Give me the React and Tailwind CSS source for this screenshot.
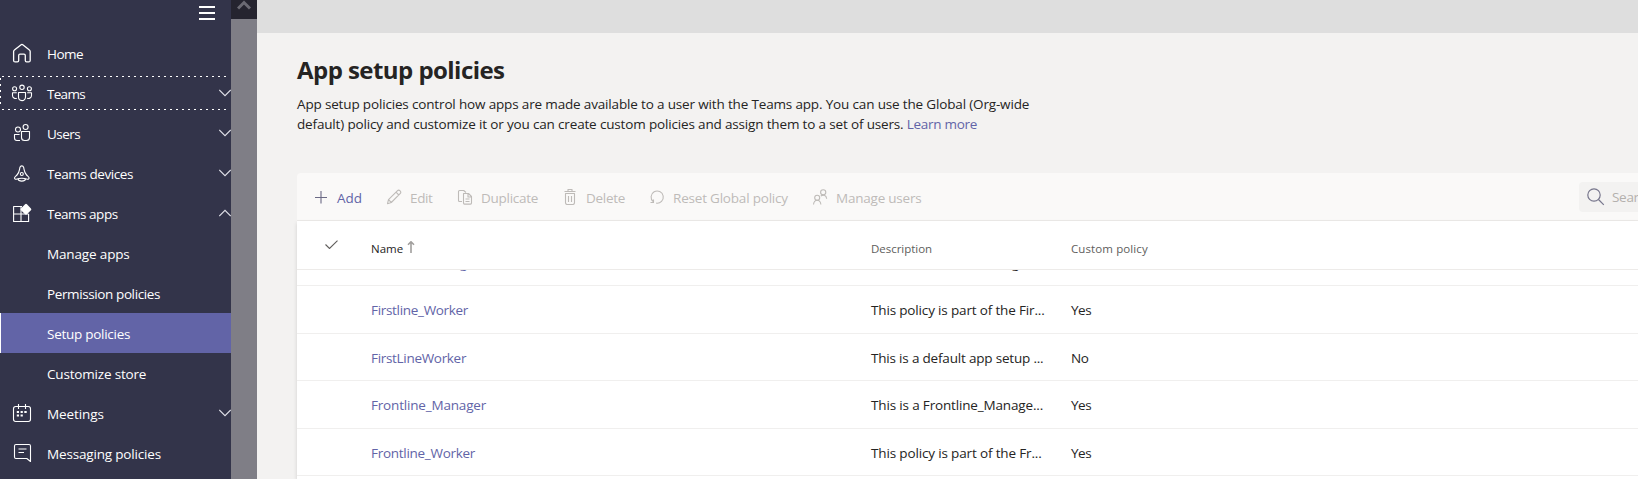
import React from "react";

function Icon({ children, className = "size-6" }) {
  return (
    <svg
      viewBox={className.includes("size-6") ? "0 0 24 24" : "0 0 16 16"}
      className={`${className} shrink-0`}
      fill="none"
      stroke="currentColor"
      strokeWidth="1.1"
      strokeLinejoin="round"
    >
      {children}
    </svg>
  );
}

const icons = {
  home: (
    <Icon className="size-6 [stroke-width:1.3]">
      <path d="M3.6 10.6a2 2 0 0 1 .8-1.6L10.8 3.9a1.8 1.8 0 0 1 2.3 0L19.4 9a2 2 0 0 1 .8 1.6v8.8a1.5 1.5 0 0 1-1.5 1.5h-2.1a1.3 1.3 0 0 1-1.3-1.3v-5.2a1.3 1.3 0 0 0-1.3-1.3h-4a1.3 1.3 0 0 0-1.3 1.3v5.2a1.3 1.3 0 0 1-1.3 1.3H5.1a1.5 1.5 0 0 1-1.5-1.5z" />
    </Icon>
  ),
  teams: (
    <Icon>
      <circle cx="4.6" cy="7.7" r="2" />
      <circle cx="12" cy="6.3" r="2.2" />
      <circle cx="19.4" cy="7.7" r="2" />
      <path d="M8.5 11.5h7v4.6a3.5 3.5 0 0 1-7 0zM6.8 11.8H2.5v2.7a3 3 0 0 0 4.3 2.7M17.2 11.8h4.3v2.7a3 3 0 0 1-4.3 2.7" />
    </Icon>
  ),
  users: (
    <Icon>
      <circle cx="8" cy="8.5" r="2.5" />
      <circle cx="15.6" cy="6" r="2.5" />
      <path d="M11.5 10.5h8v6a3 3 0 0 1-3 3h-2a3 3 0 0 1-3-3zM9.6 13.5H4.5v3.5a2.5 2.5 0 0 0 2.5 2.5h3" />
    </Icon>
  ),
  devices: (
    <Icon>
      <path d="M10 6.2a1.9 1.9 0 0 1 3.6 0c.8 3.2.4 5.2 3 7.8 1.2 1.2 2.5 1.9 2.5 3.1 0 .9-.9 1.3-1.7 1.1-3.5-1.2-7.7-1.2-11.2 0-.8.2-1.7-.2-1.7-1.1 0-1.2 1.3-1.9 2.5-3.1 2.6-2.6 2.2-4.6 3-7.8z" />
      <circle cx="11.8" cy="13" r="1.5" />
      <path d="M8 17.9c.5 3 7.100 3 7.600 0" />
    </Icon>
  ),
  apps: (
    <Icon>
      <path d="M12 5.5H3.6v15h15v-7.5M3.6 13h15M11 5.5v15" />
      <path d="M16 4.2l4 4.1-4 4.1-4.1-4.1z" fill="currentColor" strokeWidth="2.6" />
    </Icon>
  ),
  meetings: (
    <Icon>
      <rect x="3.5" y="5.5" width="17" height="15" rx="2.2" />
      <path d="M8.5 3v5M15.5 3v5" />
      <path d="M6.8 11h2.2M10.6 11h2.2M14.3 11h2.4M6.8 14.5h2.2M10.6 14.5h2.2" strokeWidth="2.2" />
    </Icon>
  ),
  messaging: (
    <Icon>
      <path d="M6 3.5h13a1.5 1.5 0 0 1 1.5 1.5v15.5l-3.7-3H6a1.5 1.5 0 0 1-1.5-1.5V5A1.5 1.5 0 0 1 6 3.5z" />
      <path d="M8.5 8h8M8.5 11.5h5.5" />
    </Icon>
  ),
};

const nav = [
  { label: "Home", icon: "home", track: "tracking-[-0.5px]" },
  { label: "Teams", icon: "teams", chevron: "down", focused: true, track: "tracking-[-0.7px]" },
  { label: "Users", icon: "users", chevron: "down", track: "tracking-[-0.5px]" },
  { label: "Teams devices", icon: "devices", chevron: "down", track: "tracking-[-0.42px]" },
  { label: "Teams apps", icon: "apps", chevron: "up", track: "tracking-[-0.48px]" },
  { label: "Manage apps", track: "tracking-[-0.15px]" },
  { label: "Permission policies", track: "tracking-[-0.39px]" },
  { label: "Setup policies", selected: true, track: "tracking-[-0.27px]" },
  { label: "Customize store", track: "tracking-[-0.18px]" },
  { label: "Meetings", icon: "meetings", chevron: "down", track: "tracking-[-0.1px]" },
  { label: "Messaging policies", icon: "messaging", track: "tracking-[-0.17px]" },
];

function NavItem({ item }) {
  return (
    <li
      className={`relative flex h-10 shrink-0 items-center pl-2.5 ${
        item.selected ? "bg-[#6264a7] shadow-[inset_1px_0_0_#fff]" : ""
      }`}
    >
      {item.focused && (
        <svg className="absolute top-[3px] left-0 h-[34px] w-[231px]" fill="none" stroke="#fff" strokeDasharray="2 4">
          <path d="M2 .5h227M2 33.5h227M.5 2v30" />
        </svg>
      )}
      <span className="flex w-[37px] shrink-0">{item.icon && icons[item.icon]}</span>
      <span className={`grow pt-px whitespace-nowrap ${item.track}`}>{item.label}</span>
      {item.chevron && (
        <svg className="h-2 w-3 shrink-0" fill="none" stroke="#e0e0e8" strokeWidth="1.1">
          <path d={item.chevron === "down" ? "M.3 1l5.7 5.7L11.7 1" : "M.3 7l5.7-5.7L11.7 7"} />
        </svg>
      )}
    </li>
  );
}

function Sidebar() {
  return (
    <nav className="flex w-[231px] shrink-0 flex-col overflow-hidden bg-[#33344a] text-white">
      <div className="flex h-[33px] shrink-0 items-start justify-end pt-1.5 pr-4">
        <div className="flex w-4 flex-col gap-1">
          <span className="h-0.5 bg-white" />
          <span className="h-0.5 bg-white" />
          <span className="h-0.5 bg-white" />
        </div>
      </div>
      <ul>
        {nav.map((item) => (
          <NavItem key={item.label} item={item} />
        ))}
      </ul>
    </nav>
  );
}

function Scrollbar() {
  return (
    <div className="w-[26px] shrink-0 bg-[#7f7e86]">
      <div className="flex h-[19px] justify-center bg-[#25242f]">
        <svg className="h-[11px] w-3.5" fill="none" stroke="#6b6a73" strokeWidth="3">
          <path d="M1 8.5l6-6 6 6" />
        </svg>
      </div>
    </div>
  );
}

const actions = [
  {
    label: "Add",
    width: "w-[73px]",
    track: "",
    icon: <path d="M8 2v12.5M2 8.5h12" stroke="#6b6a85" />,
  },
  {
    label: "Edit",
    width: "w-[71px]",
    track: "tracking-[-0.35px]",
    icon: <path d="M1.5 14.7l1-4 8.8-8.8a1.9 1.9 0 0 1 2.8 2.8l-8.8 8.8zM10 3.2l2.8 2.8M2.5 10.7l2.8 2.8" />,
  },
  {
    label: "Duplicate",
    width: "w-[105px]",
    track: "tracking-[-0.27px]",
    icon: (
      <>
        <path d="M5 12.5H2.5a1 1 0 0 1-1-1v-9a1 1 0 0 1 1-1h4.2l2.3 2" />
        <path d="M6.5 4.5h5l3 3v6.6a1 1 0 0 1-1 1h-6a1 1 0 0 1-1-1zM11 4.5v3.5h3.5M8.5 10h4M8.5 12.5h4" />
      </>
    ),
  },
  {
    label: "Delete",
    width: "w-[87px]",
    track: "tracking-[-0.3px]",
    icon: <path d="M2.5 2.5h11M6 2.5V.5h4v2M3.5 4.5h9v9.3a1.7 1.7 0 0 1-1.7 1.7H5.2a1.7 1.7 0 0 1-1.7-1.7zM6.5 7v6M9.5 7v6" />,
  },
  {
    label: "Reset Global policy",
    width: "w-[163px]",
    track: "tracking-[-0.2px]",
    icon: <path d="M7.2 14.1A6.1 6.1 0 1 0 4.2 12.7M1.5 13.5h3v-3" />,
  },
  {
    label: "Manage users",
    width: "w-[120px]",
    track: "tracking-[-0.22px]",
    icon: (
      <>
        <circle cx="5.2" cy="8.8" r="2.5" />
        <circle cx="11.2" cy="3.3" r="2.6" />
        <path d="M1.5 15.5c.3-2.5 1.8-4.2 3.7-4.2s3.4 1.7 3.7 4.2M8.8 7.2c2-2 5.4-1.3 5.9 2.5" />
      </>
    ),
  },
];

function Toolbar() {
  return (
    <div className="flex h-[48px] rounded-tl-sm border-b border-[#edebe9] bg-[#faf9f8] pl-4">
      {actions.map((a, i) => (
        <div
          key={a.label}
          className={`flex shrink-0 items-center gap-2 ${a.width} ${i === 0 ? "text-[#6264a7]" : "text-[#bebbb8]"}`}
        >
          <Icon className="size-4">{a.icon}</Icon>
          <span className={`pt-[3px] whitespace-nowrap ${a.track}`}>{a.label}</span>
        </div>
      ))}
      <div className="mt-[9px] ml-auto flex h-[30px] w-[59px] items-center overflow-hidden rounded-l-sm bg-[#f3f2f1] pl-2">
        <svg className="h-[18px] w-[25px] shrink-0" fill="none" stroke="#77768c" strokeWidth="1.2">
          <circle cx="7" cy="7" r="6.2" />
          <path d="M11.5 11.5l5.3 5.3" />
        </svg>
        <span className="tracking-[-0.3px] text-[#b3b0ad]">Search</span>
      </div>
    </div>
  );
}

const rows = [
  { name: "Firstline_Worker", nt: "tracking-[-0.31px]", desc: "This policy is part of the Fir...", dt: "tracking-[-0.16px]", custom: "Yes", h: "h-[48px]" },
  { name: "FirstLineWorker", nt: "tracking-[-0.31px]", desc: "This is a default app setup ...", dt: "tracking-[-0.19px]", custom: "No", h: "h-[47px] pt-0.5" },
  { name: "Frontline_Manager", nt: "tracking-[-0.18px]", desc: "This is a Frontline_Manage...", dt: "tracking-[-0.16px]", custom: "Yes", h: "h-[48px]" },
  { name: "Frontline_Worker", nt: "tracking-[-0.28px]", desc: "This policy is part of the Fr...", dt: "tracking-[-0.15px]", custom: "Yes", h: "h-[47px] pt-0.5" },
];

function Cells({ row }) {
  return (
    <>
      <span className={`w-[500px] shrink-0 text-[#6264a7] ${row.nt}`}>{row.name}</span>
      <span className={`w-[200px] shrink-0 text-[#252423] ${row.dt}`}>{row.desc}</span>
      <span className="tracking-[-0.5px] text-[#252423]">{row.custom}</span>
    </>
  );
}

function PolicyTable() {
  return (
    <div className="grow bg-white whitespace-nowrap shadow-[0_2px_4px_rgba(0,0,0,0.14)]">
      <div className="flex h-[49px] items-center border-b border-[#edebe9] pl-7 text-[11.5px]">
        <svg className="mb-0.5 h-[9px] w-[46px] shrink-0" fill="none" stroke="#605e5c" strokeWidth="1.1">
          <path d="M.5 4.5l4 4L12.5.7" />
        </svg>
        <div className="flex w-[500px] shrink-0 items-center gap-1 pt-2">
          <span className="text-[#252423]">Name</span>
          <svg className="mb-1 h-3 w-[9px]" fill="none" stroke="#a19f9d" strokeWidth="1.6">
            <path d="M4 12V1M1 3.8l3-3 3 3" />
          </svg>
        </div>
        <span className="w-[200px] shrink-0 pt-2 tracking-[-0.03px] text-[#605e5c]">Description</span>
        <span className="pt-2 tracking-[0.1px] text-[#605e5c]">Custom policy</span>
      </div>
      <div className="flex h-4 items-end overflow-hidden border-b border-[#f0efee] pb-[12.5px] pl-[74px]">
        <Cells
          row={{
            name: "Firstline_Manager",
            nt: "tracking-[-0.18px]",
            desc: "This is a Firstline_Manage...",
            dt: "tracking-[-0.16px]",
          }}
        />
      </div>
      {rows.map((row) => (
        <div key={row.name} className={`flex items-center border-b border-[#f0efee] pl-[74px] ${row.h}`}>
          <Cells row={row} />
        </div>
      ))}
    </div>
  );
}

export default function App() {
  return (
    <div className="flex h-[479px] w-full overflow-hidden bg-[#f3f2f1] font-['Open_Sans','Noto_Sans',sans-serif] text-[13.5px] leading-5">
      <Sidebar />
      <Scrollbar />
      <main className="flex min-w-0 grow flex-col">
        <div className="h-[33px] shrink-0 bg-[#dedede]" />
        <div className="flex grow flex-col pl-10">
          <header className="h-[140px] shrink-0 pt-[21px] whitespace-nowrap text-[#252423]">
            <h1 className="text-[24px] leading-8 font-bold tracking-[-0.55px]">App setup policies</h1>
            <p className="mt-2 tracking-[-0.16px]">
              App setup policies control how apps are made available to a user with the Teams app. You can use the
              Global (Org-wide
              <br />
              default) policy and customize it or you can create custom policies and assign them to a set of users.{" "}
              <a className="tracking-[-0.3px] text-[#6264a7]">Learn more</a>
            </p>
          </header>
          <Toolbar />
          <PolicyTable />
        </div>
      </main>
    </div>
  );
}
